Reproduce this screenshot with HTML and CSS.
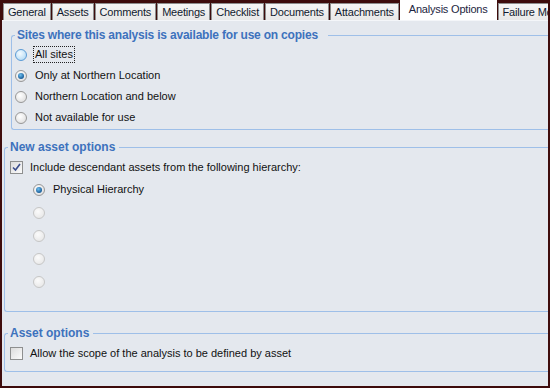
FILE: index.html
```html
<!DOCTYPE html>
<html>
<head>
  <meta charset="UTF-8" />
  <title>Analysis Options</title>
  <link rel="stylesheet" href="styles.css">
</head>
<body>
  <div class='window'>
    <div class='tabs'>
      <div class='tab'>General</div>
      <div class='tab'>Assets</div>
      <div class='tab'>Comments</div>
      <div class='tab'>Meetings</div>
      <div class='tab'>Checklist</div>
      <div class='tab'>Documents</div>
      <div class='tab'>Attachments</div>
      <div class='tab active'>Analysis Options</div>
      <div class='tab'>Failure Modes</div>
    </div>

    <main class='content'>
      <fieldset class='group sites'>
        <legend>Sites where this analysis is available for use on copies</legend>
        <div class='row'>
          <span class='radio hot'></span>
          <span class='label focus'>All sites</span>
        </div>
        <div class='row'>
          <span class='radio checked'></span>
          <span class='label'>Only at Northern Location</span>
        </div>
        <div class='row'>
          <span class='radio'></span>
          <span class='label'>Northern Location and below</span>
        </div>
        <div class='row'>
          <span class='radio'></span>
          <span class='label'>Not available for use</span>
        </div>
      </fieldset>

      <fieldset class='group newAsset'>
        <legend>New asset options</legend>
        <div class='row check'>
          <span class='checkbox checked'>
            <svg width="9" height="9" viewBox="0 0 9 9">
              <path d="M1 4.5L3.5 7L8 1" fill="none" stroke="#3b4d8c" stroke-width="1.6"></path>
            </svg>
          </span>
          <span class='label'>Include descendant assets from the following hierarchy:</span>
        </div>
        <div class='hierarchy'>
          <div class='row'>
            <span class='radio checked'></span>
            <span class='label'>Physical Hierarchy</span>
          </div>
          <div class='row'><span class='radio disabled'></span></div>
          <div class='row'><span class='radio disabled'></span></div>
          <div class='row'><span class='radio disabled'></span></div>
          <div class='row'><span class='radio disabled'></span></div>
        </div>
      </fieldset>

      <fieldset class='group assetOptions'>
        <legend>Asset options</legend>
        <div class='row check'>
          <span class='checkbox'></span>
          <span class='label'>Allow the scope of the analysis to be defined by asset</span>
        </div>
      </fieldset>
    </main>
  </div>
</body>
</html>
```

FILE: styles.css
```css
body {
  margin: 0;
  font-family: "Liberation Sans", Arial, sans-serif;
  font-size: 11px;
  color: #111;
}

.window {
  width: 550px;
  height: 388px;
  box-sizing: border-box;
  padding: 0 2px 2px 2px;
  background-color: #3e0c0c;
  display: flex;
  flex-direction: column;
  overflow: hidden;
}

.tabs {
  height: 20px;
  display: flex;
  align-items: flex-end;
  gap: 1px;
  padding-left: 1px;
  overflow: hidden;
  flex-shrink: 0;
}

.tab {
  height: 17px;
  box-sizing: border-box;
  padding: 0 4px;
  line-height: 16px;
  letter-spacing: -0.2px;
  white-space: nowrap;
  border: 1px solid #8d8d8d;
  border-bottom: none;
  background: linear-gradient(#f6f6f6, #e8e8e8);
  color: #111a2e;
  flex-shrink: 0;
}

.tab.active {
  height: 20px;
  line-height: 17px;
  padding: 0 8px;
  border-color: #fff;
  background: #fff;
  color: #1c2540;
}

.content {
  flex: 1;
  background-color: #e4e8ee;
  border-top: 1px solid #f4f6f9;
  padding-top: 7px;
  overflow: hidden;
}

.group {
  margin: 0;
  padding: 2px 0 1px 3px;
  border: 1px solid #9ebfe8;
  border-right: none;
  border-radius: 3px 0 0 3px;
  min-width: 0;
}

.group legend {
  padding: 0 4px 0 2px;
  line-height: 14px;
  font-weight: bold;
  font-size: 12px;
  color: #3d72bd;
}

.sites {
  margin-left: 9px;
}

.sites legend {
  padding-right: 10px;
  letter-spacing: -0.2px;
}

.newAsset {
  margin: 10px 0 0 2px;
  padding-bottom: 18px;
}

.assetOptions {
  margin: 14px 0 0 2px;
  padding-bottom: 7px;
}

.row {
  height: 21px;
  display: flex;
  align-items: center;
  gap: 8px;
}

.row.check {
  height: 22px;
  padding-left: 2px;
  gap: 7px;
}

.hierarchy {
  padding-left: 25px;
}

.hierarchy .row {
  height: 23px;
}

.label {
  white-space: nowrap;
  line-height: 13px;
}

.label.focus {
  outline: 1px dotted #222;
  outline-offset: 1px;
}

.radio {
  width: 12px;
  height: 12px;
  box-sizing: border-box;
  border-radius: 50%;
  border: 1px solid #979797;
  background: radial-gradient(circle at 40% 35%, #ffffff, #d8d8d8);
  position: relative;
  flex-shrink: 0;
}

.radio.hot {
  border-color: #5b9bd5;
  background: radial-gradient(circle at 40% 35%, #f4fbff, #a6d3f2);
}

.radio.checked::after {
  content: '';
  position: absolute;
  left: 2px;
  top: 2px;
  width: 6px;
  height: 6px;
  border-radius: 50%;
  background: radial-gradient(circle at 40% 35%, #6fc0f0, #1a5e9a 70%);
}

.radio.disabled {
  border-color: #c6c6c6;
  background: radial-gradient(circle at 40% 35%, #fbfbfb, #e3e3e3);
}

.checkbox {
  width: 13px;
  height: 13px;
  box-sizing: border-box;
  border: 1px solid #8e8f8f;
  background: linear-gradient(135deg, #dcdcdc, #fbfbfb);
  display: flex;
  align-items: center;
  justify-content: center;
  flex-shrink: 0;
}
```
